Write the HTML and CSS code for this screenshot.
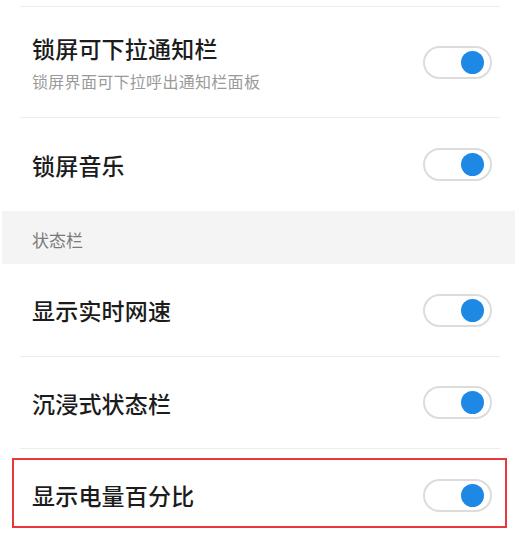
FILE: index.html
```html
<!DOCTYPE html>
<html lang="zh-CN">
<head>
<meta charset="utf-8">
<link rel="stylesheet" href="styles.css">
</head>
<body>
<div class="page">
  <div class="topline"></div>
  <div class="row row-tall divided">
    <div class="texts">
      <div class="title">锁屏可下拉通知栏</div>
      <div class="sub">锁屏界面可下拉呼出通知栏面板</div>
    </div>
    <div class="toggle"><span class="knob"></span></div>
  </div>
  <div class="row row-2">
    <div class="title">锁屏音乐</div>
    <div class="toggle"><span class="knob"></span></div>
  </div>
  <div class="section">状态栏</div>
  <div class="row row-3 divided">
    <div class="title">显示实时网速</div>
    <div class="toggle"><span class="knob"></span></div>
  </div>
  <div class="row row-4 divided">
    <div class="title">沉浸式状态栏</div>
    <div class="toggle"><span class="knob"></span></div>
  </div>
  <div class="row row-5 highlighted">
    <div class="title">显示电量百分比</div>
    <div class="toggle"><span class="knob"></span></div>
  </div>
</div>
</body>
</html>
```

FILE: styles.css
```css
* { box-sizing: border-box; }
html, body { margin: 0; padding: 0; background: #ffffff; }
body {
  font-family: "Noto Sans CJK SC", "Noto Sans", sans-serif;
  width: 520px;
  height: 540px;
  overflow: hidden;
}
.page { display: flex; flex-direction: column; }
.topline {
  margin: 6px 20px 0 20px;
  height: 1px;
  background: #ececec;
}
.row {
  display: flex;
  align-items: center;
  justify-content: space-between;
  margin: 0 20px;
  padding: 0 8px 0 12px;
  position: relative;
}
.divided { border-bottom: 1px solid #ececec; }
.row-tall { height: 111px; }
.row-2 { height: 93px; }
.row-3 { height: 93px; }
.row-4 { height: 92px; }
.row-5 { height: 92px; }
.texts { display: flex; flex-direction: column; gap: 8px; margin-top: -1px; }
.title {
  font-size: 23px;
  font-weight: 500;
  color: #1c1c1c;
  line-height: 30px;
  letter-spacing: 0.2px;
}
.sub {
  font-size: 16px;
  color: #9a9a9a;
  line-height: 20px;
  letter-spacing: 0.3px;
}
.section {
  height: 53px;
  margin: 0 5px 0 2px;
  background: #f4f4f4;
  color: #7a7a7a;
  font-size: 17px;
  line-height: 20px;
  padding: 19px 0 0 30px;
}
.toggle {
  width: 69px;
  height: 33px;
  border: 2px solid #dcdcdc;
  border-radius: 17px;
  background: #ffffff;
  display: flex;
  align-items: center;
  justify-content: flex-end;
  padding-right: 6px;
}
.knob {
  width: 23px;
  height: 23px;
  border-radius: 50%;
  background: #1e88e5;
}
.highlighted::after {
  content: "";
  position: absolute;
  left: -8px;
  right: -7px;
  top: 9px;
  bottom: 13px;
  border: 2px solid #e8383b;
}
```
